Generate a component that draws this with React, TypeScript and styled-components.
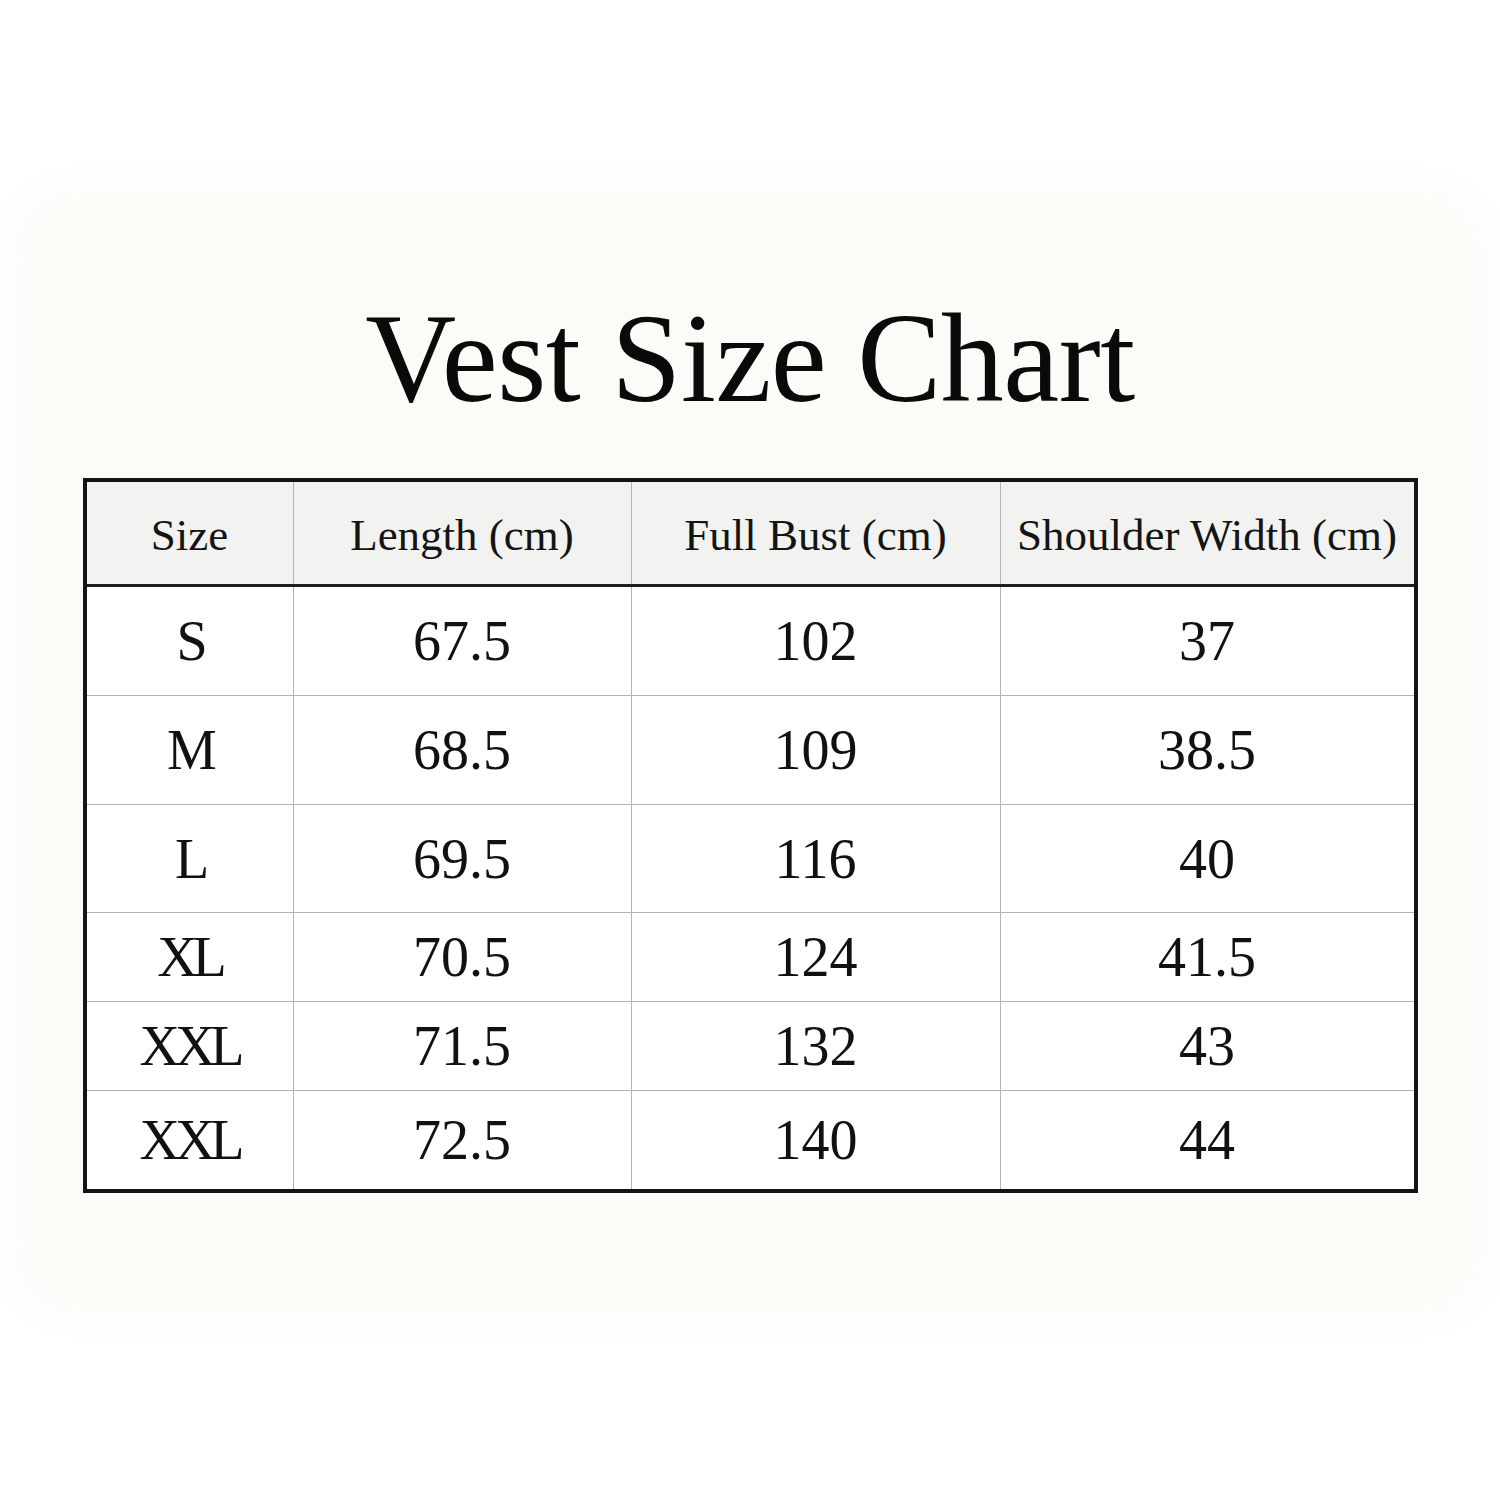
import { createGlobalStyle, styled } from 'styled-components';

const GlobalStyle = createGlobalStyle`
  html, body {
    margin: 0;
    padding: 0;
    background: #ffffff;
  }
  body {
    font-family: "Liberation Serif", "Times New Roman", serif;
    color: #111111;
  }
`;

type Row = { size: string; length: string; bust: string; shoulder: string; height: number; last?: boolean };

const rows: Row[] = [
  { size: 'S', length: '67.5', bust: '102', shoulder: '37', height: 109 },
  { size: 'M', length: '68.5', bust: '109', shoulder: '38.5', height: 109 },
  { size: 'L', length: '69.5', bust: '116', shoulder: '40', height: 108 },
  { size: 'XL', length: '70.5', bust: '124', shoulder: '41.5', height: 89 },
  { size: 'XXL', length: '71.5', bust: '132', shoulder: '43', height: 89 },
  { size: 'XXL', length: '72.5', bust: '140', shoulder: '44', height: 98, last: true },
];

const headers = ['Size', 'Length (cm)', 'Full Bust (cm)', 'Shoulder Width (cm)'];

const App = () => {
  return (
    <Page>
      <GlobalStyle />
      <Sheet>
        <Title>Vest Size Chart</Title>
        <Table>
          <HeadRow>
            {headers.map((h, i) => (
              <HeadCell key={h} $end={i === headers.length - 1}>
                {h}
              </HeadCell>
            ))}
          </HeadRow>
          {rows.map((r, idx) => (
            <BodyRow key={idx} $height={r.height} $last={r.last}>
              <Cell $size>{r.size}</Cell>
              <Cell>{r.length}</Cell>
              <Cell>{r.bust}</Cell>
              <Cell $end>{r.shoulder}</Cell>
            </BodyRow>
          ))}
        </Table>
      </Sheet>
    </Page>
  );
};

const Page = styled.div`
  width: 1500px;
  min-height: 1500px;
  background: #ffffff;
  padding: 215px 40px 0;
  box-sizing: border-box;
`;

const Sheet = styled.div`
  background: #fbfbf7;
  box-shadow: 0 0 50px 30px #fbfbf7;
  border-radius: 30px;
  padding: 81px 0 96px;
  display: flex;
  flex-direction: column;
  align-items: center;
`;

const Title = styled.h1`
  margin: 0 0 56px;
  font-family: "Liberation Serif", "Times New Roman", serif;
  font-weight: 400;
  font-size: 126px;
  line-height: 1;
  letter-spacing: -0.5px;
  color: #0a0a0a;
`;

const Table = styled.div`
  width: 1335px;
  box-sizing: border-box;
  border: 4px solid #141414;
  background: #ffffff;
  display: flex;
  flex-direction: column;
`;

const HeadRow = styled.div`
  display: grid;
  grid-template-columns: 207px 338px 369px 1fr;
  height: 105px;
  box-sizing: border-box;
  background: #f2f2f0;
  border-bottom: 3px solid #1e1e1e;
`;

const HeadCell = styled.div<{ $end?: boolean }>`
  display: flex;
  align-items: center;
  justify-content: center;
  border-right: ${(p) => (p.$end ? 'none' : '1px solid #b4b4b4')};
  font-size: 45px;
  line-height: 1;
  color: #141414;
  white-space: nowrap;
  padding-top: 4px;
`;

const BodyRow = styled.div<{ $height: number; $last?: boolean }>`
  display: grid;
  grid-template-columns: 207px 338px 369px 1fr;
  height: ${(p) => p.$height}px;
  box-sizing: border-box;
  border-bottom: ${(p) => (p.$last ? 'none' : '1px solid #b4b4b4')};
`;

const Cell = styled.div<{ $end?: boolean; $size?: boolean }>`
  display: flex;
  align-items: center;
  justify-content: center;
  border-right: ${(p) => (p.$end ? 'none' : '1px solid #b4b4b4')};
  font-size: 56px;
  line-height: 1;
  color: #111111;
  letter-spacing: ${(p) => (p.$size ? '-5px' : '0')};
`;

export default App;
